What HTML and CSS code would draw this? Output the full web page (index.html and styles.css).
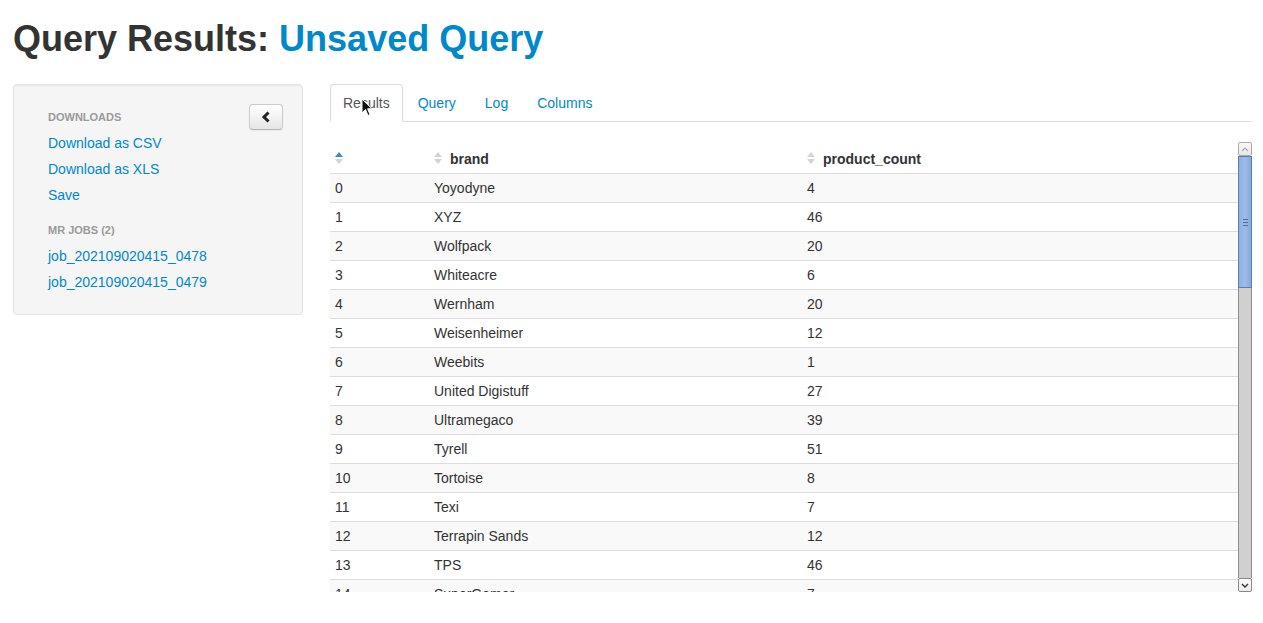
FILE: index.html
```html
<!DOCTYPE html>
<html>
<head>
<meta charset="utf-8">
<link rel="stylesheet" href="styles.css">
</head>
<body>
<div class="page">
  <h1 class="title">Query Results: <span class="title-accent">Unsaved Query</span></h1>
  <div class="layout">
    <aside class="sidebar">
      <button class="collapse-btn" type="button">
        <svg width="10" height="12" viewBox="0 0 10 12"><polyline points="7.5,1.5 3,6 7.5,10.5" fill="none" stroke="#222" stroke-width="3" stroke-linecap="butt" stroke-linejoin="miter"/></svg>
      </button>
      <ul class="nav-list">
        <li class="nav-header">Downloads</li>
        <li><a href="#">Download as CSV</a></li>
        <li><a href="#">Download as XLS</a></li>
        <li><a href="#">Save</a></li>
        <li class="nav-header spaced">MR Jobs (2)</li>
        <li><a href="#">job_202109020415_0478</a></li>
        <li><a href="#">job_202109020415_0479</a></li>
      </ul>
    </aside>
    <main class="main">
      <ul class="tabs">
        <li class="tab active"><a href="#">Results</a></li>
        <li class="tab"><a href="#">Query</a></li>
        <li class="tab"><a href="#">Log</a></li>
        <li class="tab"><a href="#">Columns</a></li>
      </ul>
      <div class="results">
        <div class="table-wrap">
          <table class="grid">
            <colgroup><col class="c1"><col class="c2"><col class="c3"></colgroup>
            <thead>
              <tr>
                <th><div class="th-inner"><span class="sort"><i class="up on"></i><i class="down"></i></span></div></th>
                <th><div class="th-inner"><span class="sort"><i class="up"></i><i class="down"></i></span>brand</div></th>
                <th><div class="th-inner"><span class="sort"><i class="up"></i><i class="down"></i></span>product_count</div></th>
              </tr>
            </thead>
            <tbody>
              <tr><td>0</td><td>Yoyodyne</td><td>4</td></tr>
              <tr><td>1</td><td>XYZ</td><td>46</td></tr>
              <tr><td>2</td><td>Wolfpack</td><td>20</td></tr>
              <tr><td>3</td><td>Whiteacre</td><td>6</td></tr>
              <tr><td>4</td><td>Wernham</td><td>20</td></tr>
              <tr><td>5</td><td>Weisenheimer</td><td>12</td></tr>
              <tr><td>6</td><td>Weebits</td><td>1</td></tr>
              <tr><td>7</td><td>United Digistuff</td><td>27</td></tr>
              <tr><td>8</td><td>Ultramegaco</td><td>39</td></tr>
              <tr><td>9</td><td>Tyrell</td><td>51</td></tr>
              <tr><td>10</td><td>Tortoise</td><td>8</td></tr>
              <tr><td>11</td><td>Texi</td><td>7</td></tr>
              <tr><td>12</td><td>Terrapin Sands</td><td>12</td></tr>
              <tr><td>13</td><td>TPS</td><td>46</td></tr>
              <tr><td>14</td><td>SuperGamer</td><td>7</td></tr>
              <tr><td>15</td><td>Sto Plains</td><td>9</td></tr>
            </tbody>
          </table>
        </div>
        <div class="vscroll">
          <div class="sb-btn"><svg width="8" height="5" viewBox="0 0 8 5"><polyline points="1,4 4,1 7,4" fill="none" stroke="#aaa" stroke-width="1.2"/></svg></div>
          <div class="sb-thumb"><span class="grip"></span></div>
          <div class="sb-track"></div>
          <div class="sb-btn bottom"><svg width="8" height="5" viewBox="0 0 8 5"><polyline points="1,1 4,4 7,1" fill="none" stroke="#333" stroke-width="1.4"/></svg></div>
        </div>
      </div>
    </main>
  </div>
</div>
<svg class="cursor" width="12" height="19" viewBox="0 0 12 19"><path d="M1,1 L1,15 L4.5,11.5 L7,17.5 L9,16.5 L6.6,10.8 L11,10.8 Z" fill="#111" stroke="#fff" stroke-width="1"/></svg>
</body>
</html>
```

FILE: styles.css
```css
* { box-sizing: border-box; }
html, body { margin: 0; padding: 0; background: #fff; }
body {
  font-family: "Liberation Sans", Arial, sans-serif;
  font-size: 14px;
  line-height: 20px;
  color: #333;
}
.page { padding: 0 11px 0 13px; }
.title {
  margin: 0;
  padding-top: 19px;
  font-size: 36px;
  line-height: 40px;
  font-weight: bold;
  color: #333;
}
.title-accent { color: #0088cc; }
.layout {
  display: flex;
  gap: 27px;
  margin-top: 25px;
  align-items: flex-start;
}
.sidebar {
  width: 290px;
  flex: none;
  background: #f5f5f5;
  border: 1px solid #e3e3e3;
  border-radius: 4px;
  box-shadow: inset 0 1px 1px rgba(0,0,0,0.05);
  padding: 19px;
}
.collapse-btn {
  float: right;
  width: 34px;
  height: 26px;
  margin: 0;
  padding: 0;
  border: 1px solid #ccc;
  border-bottom-color: #b3b3b3;
  border-radius: 4px;
  background: linear-gradient(#ffffff, #e6e6e6);
  box-shadow: inset 0 1px 0 rgba(255,255,255,0.2), 0 1px 2px rgba(0,0,0,0.05);
  display: flex;
  align-items: center;
  justify-content: center;
}
.collapse-btn svg { display: block; }
.nav-list { list-style: none; margin: 0; padding: 0 15px; }
.nav-list li a {
  display: block;
  padding: 3px 0;
  color: #0088cc;
  text-decoration: none;
}
.nav-header {
  padding: 3px 0;
  font-size: 11px;
  font-weight: bold;
  line-height: 20px;
  color: #999;
  text-transform: uppercase;
  text-shadow: 0 1px 0 rgba(255,255,255,0.5);
}
.nav-header.spaced { margin-top: 9px; }
.main { flex: 1; min-width: 0; }
.tabs {
  list-style: none;
  margin: 0 0 20px 0;
  padding: 0;
  display: flex;
  border-bottom: 1px solid #ddd;
}
.tab { margin-bottom: -1px; margin-right: 2px; }
.tab a {
  display: block;
  padding: 8px 12px;
  line-height: 20px;
  border: 1px solid transparent;
  border-radius: 4px 4px 0 0;
  color: #0088cc;
  text-decoration: none;
}
.tab:nth-child(2) a { padding-right: 13px; }
.tab:nth-child(3) a { padding-right: 13px; }
.tab.active a {
  color: #555;
  background: #fff;
  border-color: #ddd #ddd transparent;
}
.results {
  display: flex;
  height: 450px;
}
.table-wrap {
  flex: 1;
  overflow: hidden;
  height: 450px;
}
.grid {
  width: 908px;
  border-collapse: collapse;
  table-layout: fixed;
}
.c1 { width: 99px; }
.c2 { width: 373px; }
.c3 { width: 436px; }
.grid th, .grid td {
  padding: 4px 5px;
  text-align: left;
  line-height: 20px;
  white-space: nowrap;
}
.grid th {
  font-weight: bold;
  padding-top: 7px;
  padding-bottom: 4px;
}
.th-inner {
  display: flex;
  align-items: center;
  height: 20px;
}
.grid td { border-top: 1px solid #ddd; }
.grid tbody tr:nth-child(odd) td { background: #f9f9f9; }
.sort {
  display: flex;
  flex-direction: column;
  gap: 2px;
  width: 8px;
  flex: none;
  margin-right: 8px;
  margin-top: -2px;
}
.sort i {
  display: block;
  width: 0;
  height: 0;
  border-left: 4px solid transparent;
  border-right: 4px solid transparent;
}
.sort .up { border-bottom: 5px solid #d4d4d4; }
.sort .down { border-top: 5px solid #d4d4d4; }
.sort .up.on { border-bottom-color: #3d8ac7; }
.vscroll {
  width: 14px;
  flex: none;
  display: flex;
  flex-direction: column;
  height: 450px;
}
.sb-btn {
  height: 14px;
  flex: none;
  border: 1px solid #aaa;
  border-radius: 2px;
  background: linear-gradient(#fafafa, #e8e8e8);
  display: flex;
  align-items: center;
  justify-content: center;
}
.sb-btn.bottom { border-color: #888; background: linear-gradient(#fcfcfc, #ececec); }
.sb-thumb {
  height: 132px;
  flex: none;
  background: linear-gradient(90deg, #8fb1e1, #9cbce8 50%, #86a9db);
  border: 1px solid #5c7fb3;
  display: flex;
  align-items: center;
  justify-content: center;
}
.grip {
  display: block;
  width: 5px;
  height: 7px;
  border-top: 1px solid #4d6e9e;
  border-bottom: 1px solid #4d6e9e;
  position: relative;
}
.grip::after {
  content: "";
  position: absolute;
  left: 0;
  right: 0;
  top: 2px;
  border-top: 1px solid #4d6e9e;
}
.sb-track {
  flex: 1;
  background: #d1d0cf;
  border-left: 1px solid #8e8e8e;
  border-right: 1px solid #8e8e8e;
}
.cursor {
  position: absolute;
  left: 361px;
  top: 98px;
}
```
